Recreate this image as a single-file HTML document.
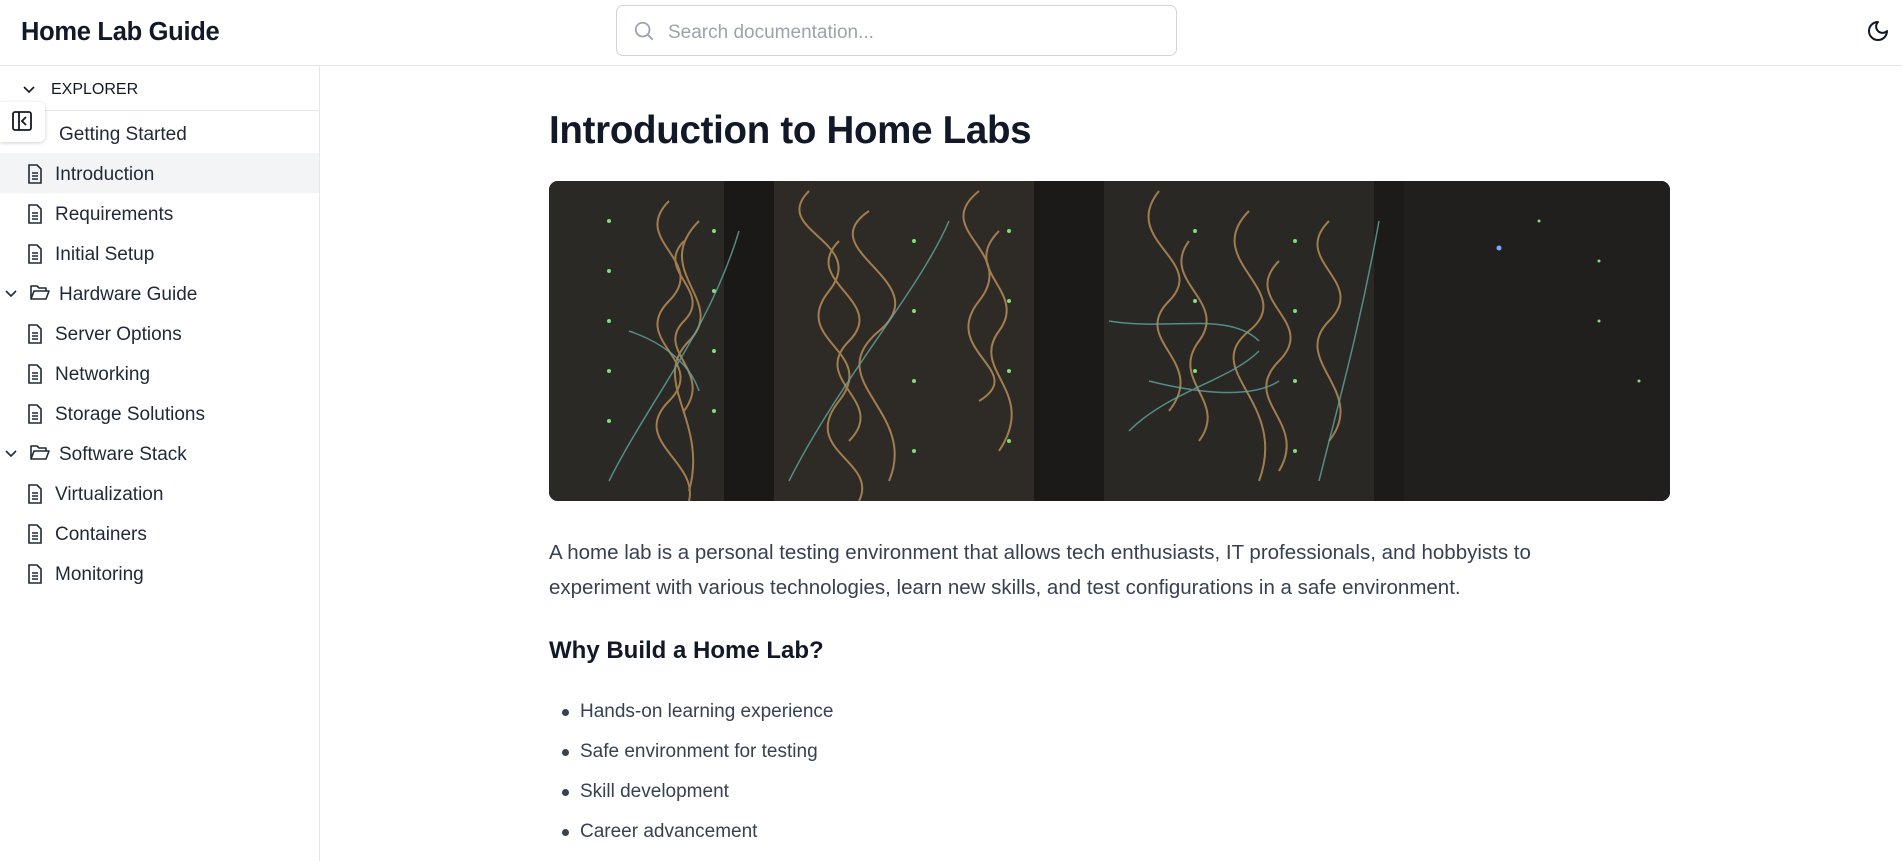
<!DOCTYPE html>
<html><head><meta charset="utf-8"><style>
*{box-sizing:border-box;margin:0;padding:0}
body{width:1902px;height:861px;overflow:hidden;background:#fff;font-family:"Liberation Sans",sans-serif;color:#111827;position:relative}
.hdr{position:absolute;left:0;top:0;width:1902px;height:66px;border-bottom:1px solid #e5e7eb}
.title{position:absolute;left:21px;top:18px;font-size:25.5px;font-weight:bold;color:#111827;letter-spacing:-0.3px}
.search{position:absolute;left:616px;top:5px;width:561px;height:51px;border:1px solid #d1d5db;border-radius:7px}
.search span{position:absolute;left:51px;top:16px;font-size:19px;color:#9ca3af}
.search svg{position:absolute;left:16px;top:14px}
.moon{position:absolute;left:1866px;top:19px}
.side{position:absolute;left:0;top:66px;width:320px;height:795px;border-right:1px solid #e5e7eb}
.exp{position:absolute;left:0;top:0;width:319px;height:45px;border-bottom:1px solid #e5e7eb}
.exp span{position:absolute;left:51px;top:15px;font-size:16px;color:#111827}
.exp svg{position:absolute;left:22px;top:18px}
.row{position:absolute;left:0;width:319px;height:40px;font-size:19px;color:#1f2937}
.row span{position:absolute;top:11px}
.row svg{position:absolute;top:11px}
.sel{background:#f3f4f6}
.tog{position:absolute;left:0;top:102px;width:45px;height:40px;background:#fff;border-radius:0 6px 6px 0;box-shadow:0 1px 4px rgba(0,0,0,.18)}
.tog svg{position:absolute;left:11px;top:8px}
h1{position:absolute;left:549px;top:109px;font-size:38.5px;font-weight:bold;color:#111827;letter-spacing:-0.3px}
.img{position:absolute;left:549px;top:181px;width:1121px;height:320px;border-radius:9px;overflow:hidden;background:#1f1e1d}
p{position:absolute;left:549px;top:535px;width:1075px;font-size:20.5px;line-height:35px;color:#374151}
h3{position:absolute;left:549px;top:637px;font-size:24px;font-weight:bold;color:#111827}
ul{position:absolute;left:580px;top:701px;list-style:none}
li{height:40px;font-size:19px;color:#374151;position:relative}
li:before{content:"";position:absolute;left-:0;left:-18px;top:8px;width:7px;height:7px;border-radius:50%;background:#374151}
</style></head><body>
<div class="hdr">
<div class="title">Home Lab Guide</div>
<div class="search"><svg width="22" height="22" viewBox="0 0 24 24" fill="none" stroke="#9ca3af" stroke-width="2"><circle cx="10.5" cy="10.5" r="7.5"/><path d="M16 16l5.5 5.5"/></svg><span>Search documentation...</span></div>
<svg class="moon" width="24" height="24" viewBox="0 0 24 24" fill="none" stroke="#111827" stroke-width="2" stroke-linejoin="round"><path d="M12 3a6 6 0 0 0 9 9 9 9 0 1 1-9-9z"/></svg>
</div>
<div class="side">
<div class="exp"><svg width="14" height="10" viewBox="0 0 14 10" fill="none" stroke="#111827" stroke-width="1.6"><path d="M2 3l5 5 5-5"/></svg><span>EXPLORER</span></div>
<div class="row" style="top:47px"><span style="left:59px">Getting Started</span></div>
<div class="row sel" style="top:87px"><svg style="left:27px" width="16" height="20" viewBox="0 0 16 20" fill="none" stroke="#1f2937" stroke-width="1.6"><path d="M2 1h8l4 4v14H2z"/><path d="M5 9h6M5 12h6M5 15h6"/></svg><span style="left:55px">Introduction</span></div>
<div class="row" style="top:127px"><svg style="left:27px" width="16" height="20" viewBox="0 0 16 20" fill="none" stroke="#1f2937" stroke-width="1.6"><path d="M2 1h8l4 4v14H2z"/><path d="M5 9h6M5 12h6M5 15h6"/></svg><span style="left:55px">Requirements</span></div>
<div class="row" style="top:167px"><svg style="left:27px" width="16" height="20" viewBox="0 0 16 20" fill="none" stroke="#1f2937" stroke-width="1.6"><path d="M2 1h8l4 4v14H2z"/><path d="M5 9h6M5 12h6M5 15h6"/></svg><span style="left:55px">Initial Setup</span></div>
<div class="row" style="top:207px"><svg style="left:4px;top:15px" width="14" height="10" viewBox="0 0 14 10" fill="none" stroke="#1f2937" stroke-width="1.6"><path d="M2 3l5 5 5-5"/></svg><svg style="left:30px;top:11px" width="20" height="17" viewBox="0 0 20 17" fill="none" stroke="#1f2937" stroke-width="1.6" stroke-linejoin="round"><path d="M1 15V2h6l2 2h7v3M1 15l3-8h15l-3 8z"/></svg><span style="left:59px">Hardware Guide</span></div>
<div class="row" style="top:247px"><svg style="left:27px" width="16" height="20" viewBox="0 0 16 20" fill="none" stroke="#1f2937" stroke-width="1.6"><path d="M2 1h8l4 4v14H2z"/><path d="M5 9h6M5 12h6M5 15h6"/></svg><span style="left:55px">Server Options</span></div>
<div class="row" style="top:287px"><svg style="left:27px" width="16" height="20" viewBox="0 0 16 20" fill="none" stroke="#1f2937" stroke-width="1.6"><path d="M2 1h8l4 4v14H2z"/><path d="M5 9h6M5 12h6M5 15h6"/></svg><span style="left:55px">Networking</span></div>
<div class="row" style="top:327px"><svg style="left:27px" width="16" height="20" viewBox="0 0 16 20" fill="none" stroke="#1f2937" stroke-width="1.6"><path d="M2 1h8l4 4v14H2z"/><path d="M5 9h6M5 12h6M5 15h6"/></svg><span style="left:55px">Storage Solutions</span></div>
<div class="row" style="top:367px"><svg style="left:4px;top:15px" width="14" height="10" viewBox="0 0 14 10" fill="none" stroke="#1f2937" stroke-width="1.6"><path d="M2 3l5 5 5-5"/></svg><svg style="left:30px;top:11px" width="20" height="17" viewBox="0 0 20 17" fill="none" stroke="#1f2937" stroke-width="1.6" stroke-linejoin="round"><path d="M1 15V2h6l2 2h7v3M1 15l3-8h15l-3 8z"/></svg><span style="left:59px">Software Stack</span></div>
<div class="row" style="top:407px"><svg style="left:27px" width="16" height="20" viewBox="0 0 16 20" fill="none" stroke="#1f2937" stroke-width="1.6"><path d="M2 1h8l4 4v14H2z"/><path d="M5 9h6M5 12h6M5 15h6"/></svg><span style="left:55px">Virtualization</span></div>
<div class="row" style="top:447px"><svg style="left:27px" width="16" height="20" viewBox="0 0 16 20" fill="none" stroke="#1f2937" stroke-width="1.6"><path d="M2 1h8l4 4v14H2z"/><path d="M5 9h6M5 12h6M5 15h6"/></svg><span style="left:55px">Containers</span></div>
<div class="row" style="top:487px"><svg style="left:27px" width="16" height="20" viewBox="0 0 16 20" fill="none" stroke="#1f2937" stroke-width="1.6"><path d="M2 1h8l4 4v14H2z"/><path d="M5 9h6M5 12h6M5 15h6"/></svg><span style="left:55px">Monitoring</span></div>
</div>
<div class="tog"><svg width="22" height="22" viewBox="0 0 22 22" fill="none" stroke="#111827" stroke-width="1.8"><rect x="2" y="2" width="18" height="18" rx="2"/><path d="M8 2v18M15 7l-4 4 4 4"/></svg></div>
<h1>Introduction to Home Labs</h1>
<div class="img">
<svg width="1121" height="320" viewBox="0 0 1121 320">
<rect width="1121" height="320" fill="#252321"/>
<rect x="0" y="0" width="175" height="320" fill="#2b2926"/>
<rect x="175" y="0" width="50" height="320" fill="#1a1918"/>
<rect x="225" y="0" width="260" height="320" fill="#2e2b27"/>
<rect x="485" y="0" width="70" height="320" fill="#1b1a19"/>
<rect x="555" y="0" width="270" height="320" fill="#2a2825"/>
<rect x="825" y="0" width="30" height="320" fill="#1c1b1a"/>
<rect x="855" y="0" width="266" height="320" fill="#201f1e"/>
<g fill="none" stroke="#c99a5c" stroke-width="2" opacity=".75">
<path d="M120 20c-40 40 40 60 0 100s40 60 0 100s30 60 20 100"/><path d="M150 40c-50 50 30 80-10 120s20 80 0 150"/><path d="M135 60c-30 30 30 50 0 80s30 50 0 90"/>
<path d="M260 10c-40 40 60 50 20 100s50 60 10 110s40 60 20 100"/><path d="M320 30c-60 40 70 70 10 120s40 80 10 150"/><path d="M290 60c-40 40 50 60 10 100s40 60 0 100"/>
<path d="M430 10c-50 40 40 60 0 110s50 70 0 100"/><path d="M450 50c-40 40 30 60 0 100s40 60 0 120"/><path d="M610 10c-40 50 50 70 10 110s40 60 0 110"/><path d="M640 60c-30 40 40 60 10 100s30 60 0 100"/>
<path d="M700 30c-50 50 50 80 0 120s40 70 10 150"/><path d="M780 40c-40 40 40 60 0 100s40 70 0 120"/><path d="M730 80c-40 40 40 60 0 100s30 60 0 110"/>
</g>
<g fill="none" stroke="#5fa6a0" stroke-width="1.5" opacity=".8">
<path d="M60 300c40-80 100-150 130-250"/><path d="M240 300c50-100 130-190 160-260"/><path d="M560 140c60 10 120-10 150 20"/><path d="M580 250c40-40 100-50 130-80"/><path d="M770 300c20-80 40-150 60-260"/><path d="M80 150c30 10 60 30 70 60"/><path d="M600 200c40 10 100 20 130 0"/>
</g>
<g fill="#7fe07a">
<circle cx="60" cy="40" r="2"/><circle cx="60" cy="90" r="2"/><circle cx="60" cy="140" r="2"/><circle cx="60" cy="190" r="2"/><circle cx="60" cy="240" r="2"/>
<circle cx="165" cy="50" r="2"/><circle cx="165" cy="110" r="2"/><circle cx="165" cy="170" r="2"/><circle cx="165" cy="230" r="2"/>
<circle cx="365" cy="60" r="2"/><circle cx="365" cy="130" r="2"/><circle cx="365" cy="200" r="2"/><circle cx="365" cy="270" r="2"/>
<circle cx="460" cy="50" r="2"/><circle cx="460" cy="120" r="2"/><circle cx="460" cy="190" r="2"/><circle cx="460" cy="260" r="2"/>
<circle cx="646" cy="50" r="2"/><circle cx="646" cy="120" r="2"/><circle cx="646" cy="190" r="2"/>
<circle cx="746" cy="60" r="2"/><circle cx="746" cy="130" r="2"/><circle cx="746" cy="200" r="2"/><circle cx="746" cy="270" r="2"/>
<circle cx="990" cy="40" r="1.5"/><circle cx="1050" cy="80" r="1.5"/><circle cx="1050" cy="140" r="1.5"/><circle cx="1090" cy="200" r="1.5"/>
</g>
<circle cx="950" cy="67" r="2.5" fill="#7aa8ff"/>
</svg>
</div>
<p>A home lab is a personal testing environment that allows tech enthusiasts, IT professionals, and hobbyists to experiment with various technologies, learn new skills, and test configurations in a safe environment.</p>
<h3>Why Build a Home Lab?</h3>
<ul><li>Hands-on learning experience</li><li>Safe environment for testing</li><li>Skill development</li><li>Career advancement</li></ul>
</body></html>
